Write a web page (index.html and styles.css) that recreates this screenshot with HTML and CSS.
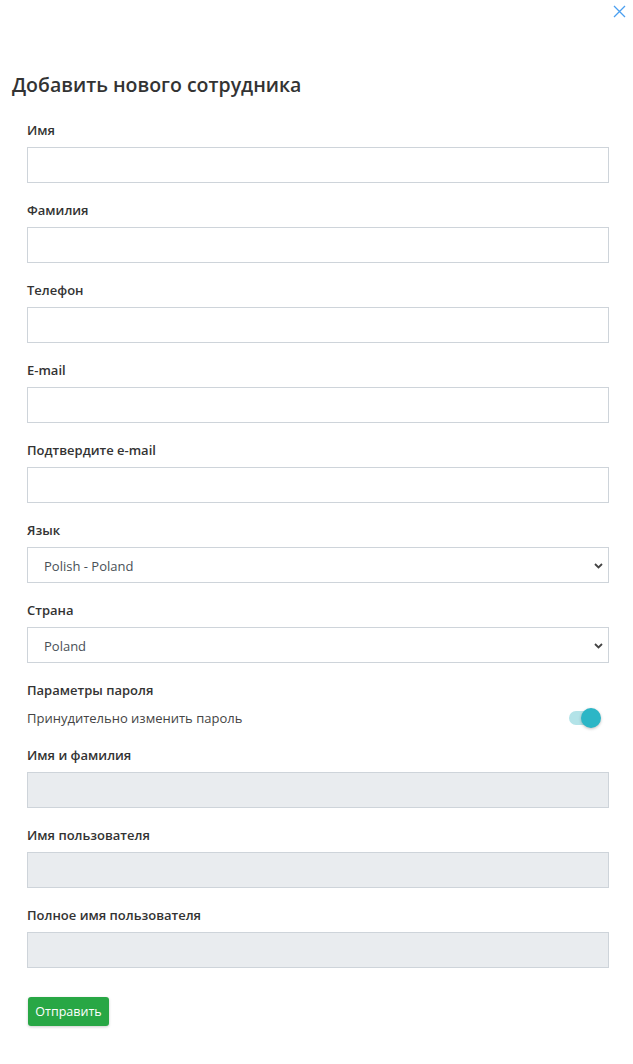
FILE: index.html
```html
<!DOCTYPE html>
<html lang="ru">
<head>
<meta charset="utf-8">
<link rel="stylesheet" href="styles.css">
</head>
<body>
<div class="modal">
  <div class="modal-top">
    <button class="close" aria-label="Закрыть">
      <svg width="13" height="13" viewBox="0 0 13 13"><path d="M1 1 L12 12 M12 1 L1 12" stroke="#4a9ff0" stroke-width="1.3" fill="none"/></svg>
    </button>
  </div>
  <h1 class="title">Добавить нового сотрудника</h1>
  <form class="form">
    <div class="group"><label class="label">Имя</label><input class="input" type="text"></div>
    <div class="group"><label class="label">Фамилия</label><input class="input" type="text"></div>
    <div class="group"><label class="label">Телефон</label><input class="input" type="text"></div>
    <div class="group"><label class="label">E-mail</label><input class="input" type="text"></div>
    <div class="group"><label class="label">Подтвердите e-mail</label><input class="input" type="text"></div>
    <div class="group"><label class="label">Язык</label>
      <div class="select-wrap"><select class="input select"><option>Polish - Poland</option></select>
        <svg class="chev" width="9" height="6" viewBox="0 0 9 6"><path d="M1 1 L4.5 4.5 L8 1" stroke="#444" stroke-width="1.8" fill="none"/></svg></div>
    </div>
    <div class="group"><label class="label">Страна</label>
      <div class="select-wrap"><select class="input select"><option>Poland</option></select>
        <svg class="chev" width="9" height="6" viewBox="0 0 9 6"><path d="M1 1 L4.5 4.5 L8 1" stroke="#444" stroke-width="1.8" fill="none"/></svg></div>
    </div>
    <div class="pw">
      <div class="label">Параметры пароля</div>
      <div class="toggle-row">
        <span class="toggle-text">Принудительно изменить пароль</span>
        <span class="toggle"><span class="track"></span><span class="knob"></span></span>
      </div>
    </div>
    <div class="group"><label class="label">Имя и фамилия</label><input class="input" type="text" disabled></div>
    <div class="group"><label class="label">Имя пользователя</label><input class="input" type="text" disabled></div>
    <div class="group"><label class="label">Полное имя пользователя</label><input class="input" type="text" disabled></div>
    <div class="actions"><button type="button" class="btn">Отправить</button></div>
  </form>
</div>
</body>
</html>
```
FILE: styles.css
```css
* { box-sizing: border-box; }
html, body { margin: 0; padding: 0; background: #fff; }
body { font-family: "Open Sans", "Noto Sans", sans-serif; color: #333; }
.modal { width: 633px; min-height: 1064px; }
.modal-top { display: flex; justify-content: flex-end; padding: 5px 7px 0 0; height: 20px; }
.close { border: 0; background: none; padding: 0; width: 13px; height: 13px; cursor: pointer; display: block; }
.close svg { display: block; }
.title { margin: 53px 0 0 12px; font-size: 19.5px; font-weight: 600; line-height: 24px; color: #333; }
.form { padding: 23px 24px 0 27px; }
.group { margin-bottom: 17px; }
.label { display: block; font-size: 13px; font-weight: 600; line-height: 20px; margin-bottom: 7px; color: #333; }
.input { display: block; width: 582px; height: 36px; border: 1px solid #ced4da; border-radius: 0; background: #fff; font-family: inherit; font-size: 13px; color: #495057; padding: 2px 16px 0; margin: 0; outline: none; }
.input:disabled { background: #e9ecef; }
.select-wrap { position: relative; width: 582px; }
.select { appearance: none; -webkit-appearance: none; }
.chev { position: absolute; right: 6px; top: 16px; pointer-events: none; }
.pw .label { margin-bottom: 8px; }
.toggle-row { display: flex; justify-content: space-between; align-items: center; height: 20px; margin-bottom: 17px; }
.toggle-text { font-size: 13px; line-height: 20px; color: #444; }
.toggle { position: relative; width: 34px; height: 20px; margin-right: 8px; }
.track { position: absolute; left: 2px; top: 3px; width: 26px; height: 14px; border-radius: 7px; background: #b3e3e8; }
.knob { position: absolute; right: 0; top: 0; width: 20px; height: 20px; border-radius: 50%; background: #2cb6c6; box-shadow: 0 1px 3px rgba(0,0,0,0.25); }
.actions { padding-top: 12px; }
.btn { margin-left: 1px; width: 81px; height: 29px; border: 0; border-radius: 3px; background: #28a745; color: #fff; font-family: inherit; font-size: 12.5px; font-weight: 400; padding: 0; box-shadow: 0 1px 3px rgba(0,0,0,0.2); }
```
